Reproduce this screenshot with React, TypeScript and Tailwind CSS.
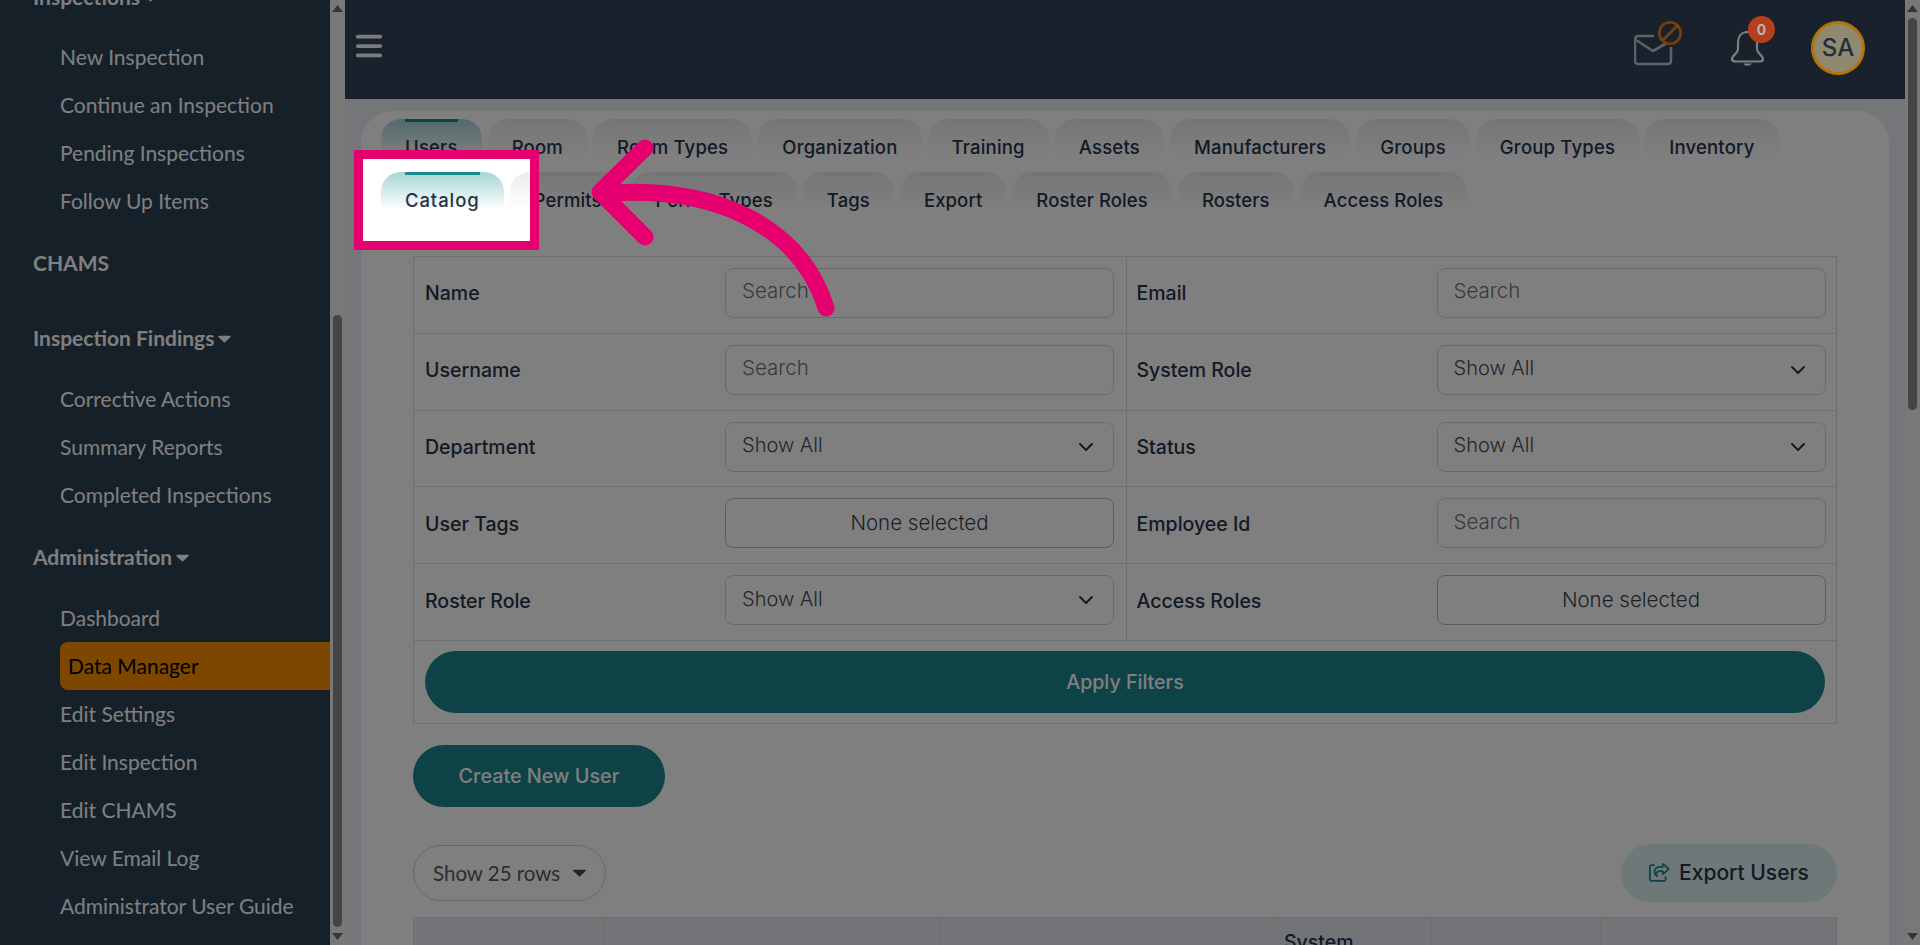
import { ChevronDown } from 'lucide-react';
import { FaBars, FaRegShareFromSquare } from 'react-icons/fa6';

const tabFont = "font-['Inter',sans-serif]";

const rowOne = ['Users', 'Room', 'Room Types', 'Organization', 'Training', 'Assets', 'Manufacturers', 'Groups', 'Group Types', 'Inventory'];
const rowTwo = ['Catalog', 'Permits', 'Permit Types', 'Tags', 'Export', 'Roster Roles', 'Rosters', 'Access Roles'];

function Caret({ className = '' }: { className?: string }) {
  return (
    <svg width="13" height="8" viewBox="0 0 14 8" className={className}>
      <path d="M1 0.5h12a.8.8 0 0 1 .6 1.3L7.6 7.4a.8.8 0 0 1-1.2 0L.4 1.8A.8.8 0 0 1 1 .5z" fill="currentColor" />
    </svg>
  );
}

function SideHeading({ label, caret, className = '' }: { label: string; caret?: boolean; className?: string }) {
  return (
    <div className={`h-12 pl-[33px] flex items-center gap-[4px] text-[21px] font-bold text-white ${className}`}>
      {label}
      {caret && <Caret className="mt-[1px]" />}
    </div>
  );
}

function SideItem({ label, active }: { label: string; active?: boolean }) {
  if (active) {
    return (
      <div className="h-12 ml-[60px] pl-2 flex items-center rounded-l-lg bg-[#fd8e00] text-[21px] text-black">{label}</div>
    );
  }
  return <div className="h-12 pl-[60px] flex items-center text-[21px] text-white">{label}</div>;
}

function Sidebar() {
  return (
    <aside className="w-[330px] shrink-0 bg-[#2c4050] overflow-hidden font-['Lato',sans-serif]">
      <div className="-mt-[27px]">
        <SideHeading label="Inspections" caret />
        <div className="mt-3">
          <SideItem label="New Inspection" />
          <SideItem label="Continue an Inspection" />
          <SideItem label="Pending Inspections" />
          <SideItem label="Follow Up Items" />
        </div>
        <SideHeading label="CHAMS" className="mt-[14px]" />
        <SideHeading label="Inspection Findings" caret className="mt-[27px]" />
        <div className="mt-[13px]">
          <SideItem label="Corrective Actions" />
          <SideItem label="Summary Reports" />
          <SideItem label="Completed Inspections" />
        </div>
        <SideHeading label="Administration" caret className="mt-[14px]" />
        <div className="mt-[13px]">
          <SideItem label="Dashboard" />
          <SideItem label="Data Manager" active />
          <SideItem label="Edit Settings" />
          <SideItem label="Edit Inspection" />
          <SideItem label="Edit CHAMS" />
          <SideItem label="View Email Log" />
          <SideItem label="Administrator User Guide" />
        </div>
      </div>
    </aside>
  );
}

function Scrollbar({ top, height }: { top: string; height: string }) {
  return (
    <div className="w-[15px] shrink-0 bg-[#f1f1f1] flex flex-col items-center relative">
      <div className={`w-[9px] rounded-full bg-[#8a8a8a] ${top} ${height}`} />
      <svg width="11" height="7" viewBox="0 0 11 7" className="absolute top-[5px] text-[#6a6a6a]">
        <path d="M5.5 0L11 7H0z" fill="currentColor" />
      </svg>
      <svg width="11" height="7" viewBox="0 0 11 7" className="absolute bottom-[5px] text-[#6a6a6a]">
        <path d="M0 0h11L5.5 7z" fill="currentColor" />
      </svg>
    </div>
  );
}

function TopBar() {
  return (
    <header className="h-[99px] shrink-0 bg-[#32435a] flex items-center">
      <div className="ml-[9px] -mt-[8px] text-[#f5f9fb]">
        <FaBars size={30} />
      </div>
      <div className="ml-auto flex items-center">
        {/* mail with disabled marker */}
        <div className="relative w-[38px] h-[32px] -mt-[2px]">
          <svg width="40" height="34" viewBox="0 0 40 34" fill="none" className="text-[#bcc4d0]">
            <path
              d="M19 3H4a3 3 0 0 0-3 3v22a3 3 0 0 0 3 3h30a3 3 0 0 0 3-3V15M2 7l17 11 13-7.5"
              stroke="currentColor"
              strokeWidth="2.6"
              strokeLinecap="round"
              strokeLinejoin="round"
            />
          </svg>
          <svg width="26" height="26" viewBox="0 0 26 26" fill="none" className="absolute -top-[13px] left-[23px]">
            <circle cx="13" cy="13" r="10.7" stroke="#f47f12" strokeWidth="2.6" />
            <path d="M6 20L20 6" stroke="#f47f12" strokeWidth="2.6" />
          </svg>
        </div>
        <div className="relative w-[33px] h-[36px] ml-[59px] -mt-[1px]">
          <svg width="33" height="36" viewBox="0 0 33 36" fill="none" className="text-white">
            <path
              d="M16.5 1C10 1 7 6 7 12v6c0 5-6 6-6 10 0 2 2 2.5 4 2.5h23c2 0 4-.5 4-2.500 0-4-6-5-6-10v-6c0-6-3-11-9.500-11z"
              stroke="currentColor"
              strokeWidth="2.2"
            />
            <path d="M12.500 32.500h8c-.5 3-7.500 3-8 0z" fill="currentColor" />
          </svg>
          <span className="absolute z-50 -top-[15px] left-[17px] w-[27px] h-[27px] rounded-full bg-[#b53f1b] text-[#b4b4b4] text-[14px] font-bold flex items-center justify-center font-['Inter',sans-serif]">
            0
          </span>
        </div>
        <div className="relative z-50 w-[54px] h-[54px] ml-[47px] mr-[40px] -mt-[3px] rounded-full border-[3px] border-[#b5730b] bg-[#8f8970] text-[#232e40] text-[24px] font-medium flex items-center justify-center font-['Inter',sans-serif]">
          SA
        </div>
      </div>
    </header>
  );
}

function Tab({ label, active, tracking }: { label: string; active?: boolean; tracking: string }) {
  return (
    <div
      className={`h-[47px] px-6 rounded-t-[20px] bg-gradient-to-b to-transparent to-80% ${
        active ? 'from-[#a6d4d6]' : 'from-[#ececec]'
      }`}
    >
      <div className={`h-[3px] ${active ? 'bg-[#1b8a8f]' : 'bg-[#e3e5ee]'}`} />
      <div className={`pt-[13px] text-[18.5px] leading-[24px] font-medium text-[#25344a] text-center ${tracking}`}>{label}</div>
    </div>
  );
}

function Field({ label, kind, right, value }: { label: string; kind: 'search' | 'select' | 'multi'; right?: boolean; value?: string }) {
  const box = 'h-[50px] rounded-lg border flex items-center font-light';
  return (
    <div className={`flex items-start pt-[11px] ${right ? 'flex-1 pl-[10px]' : 'w-[712.5px] pl-[11px] border-r border-[#dcdcdc]'}`}>
      <div className="w-[300px] h-[50px] pt-[2px] flex items-center text-[19.5px] font-medium text-[#25344a]">{label}</div>
      {kind === 'search' && <div className={`${box} w-[389px] border-[#d4d4d8] pl-[16px] pb-[3px] text-[20.5px] text-[#71757c]`}>Search</div>}
      {kind === 'select' && (
        <div className={`${box} w-[389px] border-[#d4d4d8] pl-[16px] pr-[15px] justify-between text-[20px] text-[#444b55]`}>
          <span className="pb-[3px]">{value ?? 'Show All'}</span>
          <ChevronDown size={24} className="text-[#2a3442]" strokeWidth={2} />
        </div>
      )}
      {kind === 'multi' && (
        <div className={`${box} w-[389px] border-[#b8b8b8] justify-center text-[20.5px] text-[#3a424e]`}>None selected</div>
      )}
    </div>
  );
}

function FilterRow({ children }: { children: React.ReactNode }) {
  return <div className="h-[76.8px] flex border-b border-[#dcdcdc]">{children}</div>;
}

function Filters() {
  return (
    <div className="border border-[#dcdcdc]">
      <FilterRow>
        <Field label="Name" kind="search" />
        <Field label="Email" kind="search" right />
      </FilterRow>
      <FilterRow>
        <Field label="Username" kind="search" />
        <Field label="System Role" kind="select" right />
      </FilterRow>
      <FilterRow>
        <Field label="Department" kind="select" />
        <Field label="Status" kind="select" right />
      </FilterRow>
      <FilterRow>
        <Field label="User Tags" kind="multi" />
        <Field label="Employee Id" kind="search" right />
      </FilterRow>
      <FilterRow>
        <Field label="Roster Role" kind="select" />
        <Field label="Access Roles" kind="multi" right />
      </FilterRow>
      <div className="h-[82px] pt-[10px] px-[11px]">
        <div className="h-[62px] pt-[2px] rounded-full bg-[#1b868f] text-white text-[19.6px] font-medium flex items-center justify-center">Apply Filters</div>
      </div>
    </div>
  );
}

function Card() {
  return (
    <section className={`mx-[16px] mt-3 bg-white rounded-t-[32px] px-5 pt-2 flex-1 overflow-hidden ${tabFont}`}>
      <div className="flex flex-wrap gap-x-[6px] gap-y-[6px]">
        {rowOne.map((t) => (
          <Tab key={t} label={t} active={t === 'Users'} tracking="tracking-[0.2px]" />
        ))}
        {rowTwo.map((t) => (
          <Tab key={t} label={t} active={t === 'Catalog'} tracking={t === 'Catalog' ? 'tracking-[0.9px]' : 'tracking-[0.1px]'} />
        ))}
      </div>
      <div className="mx-8 mt-[37px]">
        <Filters />
        <div className="mt-[21px] w-[252px] h-[62px] pt-[2px] rounded-full bg-[#1b868f] text-white text-[19.8px] font-medium flex items-center justify-center">
          Create New User
        </div>
        <div className="mt-[37px] h-[58px] flex items-center justify-between">
          <div className="w-[193px] h-[56px] pl-[19px] rounded-full border border-[#cfcfcf] flex items-center gap-[13px] text-[20.5px] text-[#555b66] font-['Lato',sans-serif]">
            Show 25 rows
            <Caret className="text-[#444]" />
          </div>
          <div className="w-[216px] h-[58px] rounded-full bg-[#dff0f0] flex items-center justify-center gap-[9px] text-[21px] font-medium text-[#25344a]">
            <FaRegShareFromSquare size={21} className="text-[#1b868f]" />
            Export Users
          </div>
        </div>
        <div className="mt-[15px] h-[60px] grid grid-cols-[191px_335px_335px_157px_169px_1fr] border border-[#dcdcdc] bg-[#e7e9f1] text-[19.5px] font-medium text-[#25344a]">
          <div className="border-r border-[#dcdcdc]" />
          <div className="border-r border-[#dcdcdc]" />
          <div className="border-r border-[#dcdcdc]" />
          <div className="border-r border-[#dcdcdc] pl-[9px] pt-[10px]">System</div>
          <div className="border-r border-[#dcdcdc]" />
          <div />
        </div>
      </div>
    </section>
  );
}

// dimmed overlay comes from the highlight box shadow, arrow sits over it
function Spotlight() {
  return (
    <>
      <div className="absolute z-40 left-[354px] top-[150px] w-[185px] h-[100px] border-[9px] border-[#e6006f] shadow-[0_0_0_3000px_rgba(0,0,0,0.5)]" />
      <svg className="absolute z-40 inset-0 pointer-events-none" width="1920" height="945" viewBox="0 0 1920 945" fill="none">
        <path
          d="M826 308C800 225 715 187 612 193M645 148L600 192L645 237"
          stroke="#e6006f"
          strokeWidth="17"
          strokeLinecap="round"
          strokeLinejoin="round"
        />
      </svg>
    </>
  );
}

export default function App() {
  return (
    <div className="relative h-screen w-full overflow-hidden flex bg-[#eaecf4]">
      <Sidebar />
      <Scrollbar top="mt-[315px]" height="h-[612px]" />
      <main className="flex-1 min-w-0 flex flex-col">
        <TopBar />
        <Card />
      </main>
      <Scrollbar top="mt-[18px]" height="h-[392px]" />
      <Spotlight />
    </div>
  );
}
